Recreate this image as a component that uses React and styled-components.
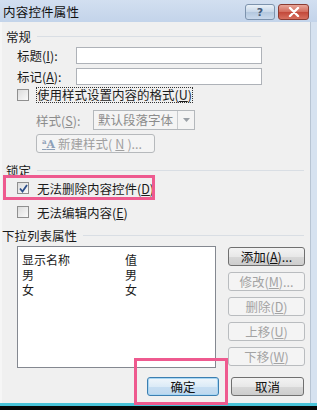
import styled, { createGlobalStyle } from "styled-components";

const Global = createGlobalStyle`
  html, body { margin: 0; padding: 0; background: #000; }
  body { font-family: "Noto Sans CJK SC", "Noto Sans", sans-serif; }
`;

export default function App() {
  return (
    <>
      <Global />
      <Window>
        <TitleBar>
          <Title>内容控件属性</Title>
          <TitleButtons>
            <HelpButton>?</HelpButton>
            <CloseButton>
              <svg width="12" height="10" viewBox="0 0 12 10">
                <path d="M2 1 L10 9 M10 1 L2 9" stroke="#fff" strokeWidth="2.4" strokeLinecap="round" />
              </svg>
            </CloseButton>
          </TitleButtons>
        </TitleBar>

        <Body>
          <GroupHeader $end={49}>常规</GroupHeader>
          <FieldRow $top={3}>
            <Label>标题(<u>I</u>):</Label>
            <TextInput />
          </FieldRow>
          <FieldRow $top={4}>
            <Label>标记(<u>A</u>):</Label>
            <TextInput />
          </FieldRow>
          <CheckRow $top={3}>
            <Box />
            <Focused>使用样式设置内容的格式(<u>U</u>)</Focused>
          </CheckRow>
          <StyleRow>
            <Label $width={57} $disabled>样式(<u>S</u>):</Label>
            <Select>
              <SelectText>默认段落字体</SelectText>
              <SelectArrow>
                <svg width="7" height="4" viewBox="0 0 7 4">
                  <path d="M0 0 H7 L3.5 4 Z" fill="#9aa0a6" />
                </svg>
              </SelectArrow>
            </Select>
          </StyleRow>
          <NewStyleButton>
            <StyleIcon>
              <small>a</small>A
            </StyleIcon>
            新建样式(<u>N</u>)...
          </NewStyleButton>

          <GroupHeader $top={9}>锁定</GroupHeader>
          <CheckRow $top={3}>
            <Box $checked>
              <svg width="9" height="9" viewBox="0 0 9 9">
                <path d="M1 4.5 L3.5 7.5 L8 1" stroke="#2d4f8a" strokeWidth="1.8" fill="none" />
              </svg>
            </Box>
            <span>无法删除内容控件(<u>D</u>)</span>
          </CheckRow>
          <CheckRow $top={10}>
            <Box />
            <span>无法编辑内容(<u>E</u>)</span>
          </CheckRow>

          <GroupHeader $top={8} $pad={0}>下拉列表属性</GroupHeader>
          <ListArea>
            <ListBox>
              <ListCell>显示名称</ListCell>
              <ListCell>值</ListCell>
              <ListCell>男</ListCell>
              <ListCell>男</ListCell>
              <ListCell>女</ListCell>
              <ListCell>女</ListCell>
            </ListBox>
            <SideButtons>
              <Button>添加(<u>A</u>)...</Button>
              <Button $disabled>修改(<u>M</u>)...</Button>
              <Button $disabled>删除(<u>D</u>)</Button>
              <Button $disabled>上移(<u>U</u>)</Button>
              <Button $disabled>下移(<u>W</u>)</Button>
            </SideButtons>
          </ListArea>

          <Footer>
            <Button $default $width={72}>确定</Button>
            <Button $width={73}>取消</Button>
          </Footer>
        </Body>
        <BottomEdge />

        <Highlight $left={3} $top={175} $width={152} $height={25} />
        <Highlight $left={134} $top={358} $width={94} $height={47} />
      </Window>
    </>
  );
}

const Window = styled.div`
  position: relative;
  width: 317px;
  height: 410px;
  display: flex;
  flex-direction: column;
  background: #d6e2f0;
  font-size: 12.5px;
  color: #1b1b1b;
  overflow: hidden;
`;

const TitleBar = styled.div`
  height: 24px;
  display: flex;
  align-items: center;
  justify-content: space-between;
  padding: 0 8px 0 3px;
  background: linear-gradient(#d2dff0, #c3d4ea);
`;

const Title = styled.span`
  font-size: 12.5px;
  color: #111;
  letter-spacing: 0.2px;
`;

const TitleButtons = styled.div`
  display: flex;
  gap: 3px;
  align-self: flex-start;
  margin-top: 4px;
`;

const HelpButton = styled.div`
  width: 30px;
  height: 16px;
  box-sizing: border-box;
  border: 1px solid #7d93ad;
  border-radius: 3px;
  background: linear-gradient(#eaf1f8, #c6d6e8 50%, #b3c7de 51%, #c9d9ec);
  color: #445a78;
  font-family: "DejaVu Sans", sans-serif;
  font-size: 11px;
  font-weight: bold;
  display: flex;
  align-items: center;
  justify-content: center;
`;

const CloseButton = styled.div`
  width: 31px;
  height: 16px;
  box-sizing: border-box;
  border: 1px solid #8a3b32;
  border-radius: 3px;
  background: linear-gradient(#e8a69a, #d26b5c 50%, #c2483a 51%, #d7705f);
  display: flex;
  align-items: center;
  justify-content: center;
`;

const Body = styled.div`
  flex: 1;
  width: 311px;
  box-sizing: border-box;
  padding: 6px 0 7px 0;
  background: #f0f0f0;
  border-left: 2px solid #f6f6f6;
  border-right: 1px solid #b7c4d3;
  display: flex;
  flex-direction: column;
`;

const GroupHeader = styled.div`
  height: 16px;
  display: flex;
  align-items: center;
  gap: 6px;
  margin-top: ${(p) => p.$top || 0}px;
  padding-left: ${(p) => (p.$pad === undefined ? 4 : p.$pad)}px;
  padding-right: ${(p) => p.$end || 6}px;
  &::after {
    content: "";
    flex: 1;
    border-top: 1px solid #d9dee4;
  }
`;

const FieldRow = styled.div`
  display: flex;
  align-items: center;
  height: 17px;
  margin-top: ${(p) => p.$top}px;
  padding-left: 15px;
`;

const Label = styled.span`
  width: ${(p) => p.$width || 59}px;
  color: ${(p) => (p.$disabled ? "#8d8d8d" : "inherit")};
  u { text-underline-offset: 1px; }
`;

const TextInput = styled.div`
  width: 186px;
  height: 17px;
  box-sizing: border-box;
  background: #fff;
  border: 1px solid #aeb2b8;
`;

const CheckRow = styled.div`
  display: flex;
  align-items: center;
  gap: 8px;
  height: 14px;
  margin-top: ${(p) => p.$top}px;
  padding-left: 15px;
`;

const Box = styled.div`
  width: 12px;
  height: 12px;
  box-sizing: border-box;
  border: 1px solid #8f8f8f;
  background: linear-gradient(135deg, #dcdcdc, #fafafa);
  display: flex;
  align-items: center;
  justify-content: center;
`;

const Focused = styled.span`
  outline: 1px dotted #333;
  outline-offset: 0;
  line-height: 14px;
`;

const StyleRow = styled.div`
  display: flex;
  align-items: center;
  height: 20px;
  margin-top: 8px;
  padding-left: 34px;
`;

const Select = styled.div`
  width: 102px;
  height: 20px;
  box-sizing: border-box;
  border: 1px solid #b4b8bc;
  background: #f4f4f4;
  display: flex;
`;

const SelectText = styled.span`
  flex: 1;
  padding-left: 4px;
  line-height: 18px;
  color: #8c8c8c;
`;

const SelectArrow = styled.span`
  width: 16px;
  border-left: 1px solid #c8cbce;
  display: flex;
  align-items: center;
  justify-content: center;
`;

const NewStyleButton = styled.div`
  width: 119px;
  height: 19px;
  box-sizing: border-box;
  margin: 4px 0 0 34px;
  border: 1px solid #b6b9bc;
  border-radius: 3px;
  background: #f4f4f4;
  color: #a0a0a0;
  display: flex;
  align-items: center;
  gap: 3px;
  padding-left: 5px;
`;

const StyleIcon = styled.span`
  font-family: "DejaVu Serif", serif;
  font-weight: bold;
  font-size: 11px;
  color: #8ea0b8;
  text-decoration: underline;
  small { font-size: 7px; vertical-align: 4px; }
`;

const ListArea = styled.div`
  display: flex;
  gap: 12px;
  margin-top: 3px;
  padding-left: 15px;
`;

const ListBox = styled.div`
  width: 199px;
  height: 122px;
  box-sizing: border-box;
  border: 1px solid #848890;
  background: #fff;
  display: grid;
  grid-template-columns: 103px 1fr;
  grid-auto-rows: 15px;
  align-content: start;
  padding: 5px 0 0 4px;
  font-size: 12px;
`;

const ListCell = styled.div`
  height: 15px;
  line-height: 15px;
  overflow: hidden;
`;

const SideButtons = styled.div`
  display: flex;
  flex-direction: column;
  gap: 6px;
  padding-top: 1px;
`;

const Button = styled.div`
  width: ${(p) => p.$width || 77}px;
  height: 19px;
  box-sizing: border-box;
  border-radius: 3px;
  display: flex;
  align-items: center;
  justify-content: center;
  border: 1px solid ${(p) => (p.$disabled ? "#b9bcbf" : p.$default ? "#3c7fb1" : "#707070")};
  background: ${(p) =>
    p.$disabled
      ? "#f4f4f4"
      : p.$default
      ? "linear-gradient(#f0f6fb, #dcebf7 50%, #c7def2 51%, #bed8ee)"
      : "linear-gradient(#f3f3f3, #e8e8e8 50%, #d8d8d8 51%, #cdcdcd)"};
  color: ${(p) => (p.$disabled ? "#a3a3a3" : "#111")};
  box-shadow: ${(p) => (p.$default ? "inset 0 0 0 1px #a9d6f3" : "none")};
`;

const Footer = styled.div`
  display: flex;
  justify-content: flex-end;
  gap: 12px;
  margin-top: 9px;
  padding-right: 6px;
`;

const BottomEdge = styled.div`
  height: 3px;
  background: #49c3d8;
  border-bottom: 4px solid #050505;
`;

const Highlight = styled.div`
  position: absolute;
  left: ${(p) => p.$left}px;
  top: ${(p) => p.$top}px;
  width: ${(p) => p.$width}px;
  height: ${(p) => p.$height}px;
  box-sizing: border-box;
  border: 3px solid #ee5a8f;
  pointer-events: none;
`;
